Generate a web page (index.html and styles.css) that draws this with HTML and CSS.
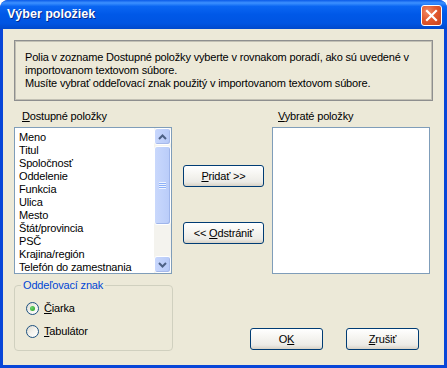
FILE: index.html
```html
<!DOCTYPE html>
<html lang="sk">
<head>
  <meta charset="UTF-8">
  <title>Výber položiek</title>
  <link rel="stylesheet" href="styles.css">
</head>
<body>
<div class="window">
  <div class="titlebar">
    <span class="title">Výber položiek</span>
    <button class="close" aria-label="Zavrieť">
      <svg width="13" height="13" viewBox="0 0 13 13"><path d="M2 2 L11 11 M11 2 L2 11" stroke="#fff" stroke-width="2.2" stroke-linecap="square"/></svg>
    </button>
  </div>
  <div class="client">
    <div class="info">
      Polia v zozname Dostupné položky vyberte v rovnakom poradí, ako sú uvedené v<br>
      importovanom textovom súbore.<br>
      Musíte vybrať oddeľovací znak použitý v importovanom textovom súbore.
    </div>

    <div class="lists">
      <div class="col">
        <div class="label left"><u>D</u>ostupné položky</div>
        <div class="listbox">
          <ul class="items">
            <li>Meno</li>
            <li>Titul</li>
            <li>Spoločnosť</li>
            <li>Oddelenie</li>
            <li>Funkcia</li>
            <li>Ulica</li>
            <li>Mesto</li>
            <li>Štát/provincia</li>
            <li>PSČ</li>
            <li>Krajina/región</li>
            <li>Telefón do zamestnania</li>
          </ul>
          <div class="scrollbar">
            <div class="sb-btn">
              <svg width="9" height="6" viewBox="0 0 9 6"><path d="M1 5 L4.5 1.5 L8 5" fill="none" stroke="#4d6185" stroke-width="2"/></svg>
            </div>
            <div class="sb-thumb"><span class="grip"></span></div>
            <div class="sb-track"></div>
            <div class="sb-btn">
              <svg width="9" height="6" viewBox="0 0 9 6"><path d="M1 1 L4.5 4.5 L8 1" fill="none" stroke="#4d6185" stroke-width="2"/></svg>
            </div>
          </div>
        </div>
      </div>

      <div class="actions">
        <button class="btn wide"><u>P</u>ridať &gt;&gt;</button>
        <button class="btn wide">&lt;&lt; <u>O</u>dstrániť</button>
      </div>

      <div class="col">
        <div class="label right"><u>V</u>ybraté položky</div>
        <div class="listbox"></div>
      </div>
    </div>

    <div class="bottom">
      <fieldset class="group">
        <legend>Oddeľovací znak</legend>
        <div class="radio"><span class="circle checked"></span><span><u>Č</u>iarka</span></div>
        <div class="radio"><span class="circle"></span><span><u>T</u>abulátor</span></div>
      </fieldset>
      <div class="dialog-buttons">
        <button class="btn">O<u>K</u></button>
        <button class="btn"><u>Z</u>rušiť</button>
      </div>
    </div>
  </div>
</div>
</body>
</html>
```

FILE: styles.css
```css
body {
  margin: 0;
  background: #fff;
  font-family: 'Liberation Sans', Arial, sans-serif;
  font-size: 11px;
  letter-spacing: -0.17px;
  color: #000;
}
.window {
  width: 447px;
  height: 368px;
  display: flex;
  flex-direction: column;
  background: #0846d8;
  border-radius: 8px 8px 0 0;
  overflow: hidden;
}
.titlebar {
  height: 29px;
  display: flex;
  align-items: center;
  justify-content: space-between;
  padding: 0 5px 0 7px;
  background: linear-gradient(to bottom, #0a5ae8 0%, #3d91ff 10%, #0a66f2 22%, #0058e8 50%, #0055e2 80%, #0049cc 100%);
  border-radius: 8px 8px 0 0;
}
.title {
  color: #fff;
  font-weight: bold;
  font-size: 12.5px;
  letter-spacing: 0;
  text-shadow: 1px 1px #0a2a8a;
  padding-bottom: 1px;
}
.close {
  width: 21px;
  height: 21px;
  padding: 0;
  display: flex;
  align-items: center;
  justify-content: center;
  border: 1px solid #fff;
  border-radius: 3px;
  background: radial-gradient(circle at 30% 30%, #f08a66 0%, #e2592e 45%, #c8421c 100%);
  margin-top: 1px;
}
.client {
  flex: 1;
  margin: 0 3px 3px 3px;
  background: #ece9d8;
  padding: 11px 11px 0 11px;
}
.info {
  height: 61px;
  box-sizing: border-box;
  border: 1px solid #8e8f8f;
  box-shadow: inset 0 0 0 1px #c2c0b4;
  padding: 10px 9px 0 10px;
  line-height: 13px;
  white-space: nowrap;
}
.lists {
  display: grid;
  grid-template-columns: 158px 100px 158px;
  margin-top: 9px;
}
.label {
  height: 13px;
  line-height: 13px;
  margin-bottom: 4px;
}
.label.left {
  padding-left: 8px;
}
.label.right {
  padding-left: 6px;
}
.listbox {
  height: 147px;
  box-sizing: border-box;
  border: 1px solid #7f9db9;
  background: #fff;
  display: flex;
}
.items {
  flex: 1;
  list-style: none;
  margin: 0;
  padding: 3px 0 0 4px;
  line-height: 13px;
  white-space: nowrap;
  overflow: hidden;
}
.scrollbar {
  width: 17px;
  display: flex;
  flex-direction: column;
  background: #f4f3ee;
}
.sb-btn {
  height: 17px;
  box-sizing: border-box;
  border: 1px solid #fff;
  border-radius: 3px;
  background: linear-gradient(to right, #c8d7fd, #b6c9f7);
  box-shadow: inset -1px -1px #a6b9ea;
  display: flex;
  align-items: center;
  justify-content: center;
}
.sb-thumb {
  height: 79px;
  margin-top: 1px;
  box-sizing: border-box;
  border: 1px solid #fff;
  border-radius: 3px;
  background: linear-gradient(to right, #c9d8fc, #b9ccf9);
  box-shadow: inset -1px -1px #9fb5ea;
  display: flex;
  align-items: center;
  justify-content: center;
}
.grip {
  width: 7px;
  height: 7px;
  background: repeating-linear-gradient(to bottom, #eef4fe 0 1px, #8cb0f8 1px 2px);
}
.sb-track {
  flex: 1;
}
.actions {
  display: flex;
  flex-direction: column;
  gap: 35px;
  padding: 55px 0 0 11px;
}
.btn {
  width: 73px;
  height: 22px;
  padding: 0;
  border: 1px solid #003c74;
  border-radius: 3px;
  background: linear-gradient(to bottom, #ffffff 0%, #f5f4f0 45%, #ecebe6 80%, #d8d2c6 100%);
  font-family: 'Liberation Sans', Arial, sans-serif;
  font-size: 11px;
  letter-spacing: -0.17px;
  color: #000;
}
.btn.wide {
  width: 81px;
}
.bottom {
  display: flex;
  align-items: flex-end;
  margin-top: 5px;
}
.group {
  width: 159px;
  height: 72px;
  box-sizing: border-box;
  margin: 0;
  padding: 0 0 0 11px;
  border: 1px solid #d0d0bf;
  border-radius: 4px;
}
.group legend {
  color: #0046d5;
  line-height: 13px;
  padding: 0 2px;
  margin-left: -5px;
}
.radio {
  display: flex;
  align-items: center;
  gap: 5px;
  height: 13px;
  line-height: 13px;
  margin-top: 10px;
}
.circle {
  width: 13px;
  height: 13px;
  box-sizing: border-box;
  border: 1px solid #1c5180;
  border-radius: 50%;
  background: linear-gradient(135deg, #dcd9cf 0%, #f4f3ee 50%, #ffffff 100%);
  display: flex;
  align-items: center;
  justify-content: center;
}
.circle.checked::after {
  content: "";
  width: 5px;
  height: 5px;
  border-radius: 50%;
  background: radial-gradient(circle at 35% 35%, #6fd36f, #21a121);
}
.dialog-buttons {
  margin-left: auto;
  margin-right: 14px;
  margin-bottom: 1px;
  display: flex;
  gap: 23px;
}
```
